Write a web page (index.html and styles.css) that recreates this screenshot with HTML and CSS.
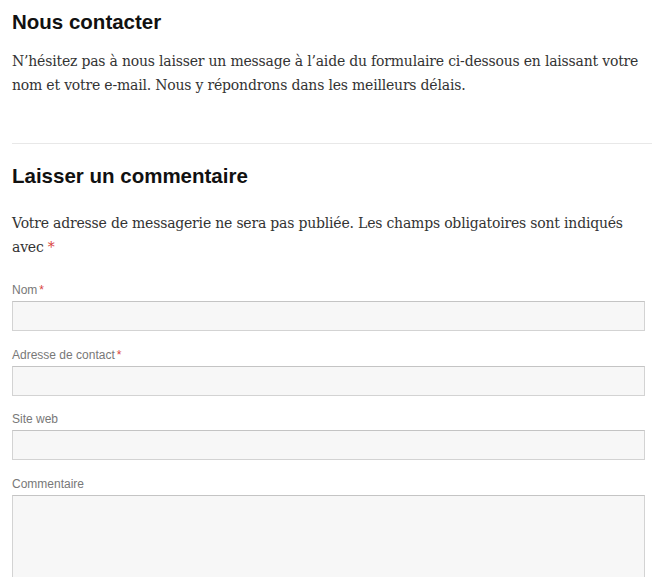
FILE: index.html
```html
<!DOCTYPE html>
<html lang="fr">
<head>
<meta charset="utf-8">
<title>Nous contacter</title>
<link rel="stylesheet" href="styles.css">
</head>
<body>
<main class="page">
  <section class="entry">
    <h1 class="entry-title">Nous contacter</h1>
    <p class="text">N’hésitez pas à nous laisser un message à l’aide du formulaire ci-dessous en laissant votre nom et votre e-mail. Nous y répondrons dans les meilleurs délais.</p>
  </section>
  <section class="respond">
    <h2 class="reply-title">Laisser un commentaire</h2>
    <p class="text notes">Votre adresse de messagerie ne sera pas publiée. Les champs obligatoires sont indiqués avec <span class="req">*</span></p>
    <form class="form">
      <div class="field">
        <label class="label" for="author">Nom<span class="req tight">*</span></label>
        <input class="input" id="author" type="text">
      </div>
      <div class="field">
        <label class="label" for="email">Adresse de contact<span class="req tight">*</span></label>
        <input class="input" id="email" type="text">
      </div>
      <div class="field">
        <label class="label" for="url">Site web</label>
        <input class="input" id="url" type="text">
      </div>
      <div class="field">
        <label class="label" for="comment">Commentaire</label>
        <textarea class="input area" id="comment"></textarea>
      </div>
    </form>
  </section>
</main>
</body>
</html>
```

FILE: styles.css
```css
html, body {
  margin: 0;
  padding: 0;
  background: #fff;
}
.page {
  width: 640px;
  padding: 7px 0 0 12px;
}
.entry-title,
.reply-title {
  margin: 0;
  font-family: "Liberation Sans", Arial, sans-serif;
  font-weight: bold;
  font-size: 20.5px;
  line-height: 30px;
  color: #111;
}
.text {
  font-family: "DejaVu Serif", Georgia, serif;
  font-size: 14px;
  letter-spacing: -0.2px;
  line-height: 24px;
  color: #333;
  margin: 0;
}
.entry .text {
  margin-top: 12px;
}
.entry {
  padding-bottom: 46px;
  border-bottom: 1px solid #e8e8e8;
}
.respond {
  padding-top: 17px;
}
.notes {
  margin-top: 20px;
}
.req {
  color: #d9443e;
}
.tight {
  margin-left: 2px;
}
.form {
  margin-top: 22px;
}
.field {
  margin-bottom: 14.5px;
}
.label {
  display: block;
  font-family: "Liberation Sans", Arial, sans-serif;
  font-size: 12px;
  line-height: 18px;
  color: #787878;
  margin-bottom: 2px;
}
.input {
  display: block;
  box-sizing: border-box;
  width: 633px;
  height: 30px;
  margin: 0;
  padding: 4px 6px;
  background: #f7f7f7;
  border: 1px solid #d3d3d3;
  border-top-color: #c4c4c4;
  border-radius: 0;
  font: 14px "Liberation Sans", Arial, sans-serif;
}
.area {
  height: 160px;
  resize: none;
}
```
